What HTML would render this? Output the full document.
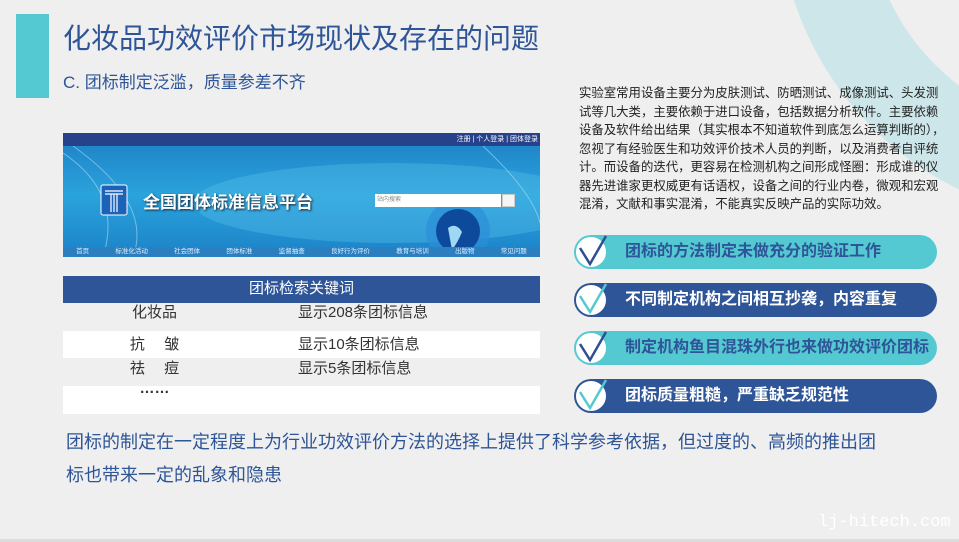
<!DOCTYPE html>
<html><head><meta charset="utf-8"><style>
*{margin:0;padding:0;box-sizing:border-box}
body{width:959px;height:542px;background:#efefef;position:relative;overflow:hidden;font-family:"Liberation Sans","Noto Sans CJK SC",sans-serif}
.abs{position:absolute}
.ring{left:778px;top:-422px;width:644px;height:644px;border-radius:50%;border:89px solid #cde6ea}
.bar{left:16px;top:14px;width:33px;height:84px;background:#55c9d2}
h1{position:absolute;left:63px;top:17px;font-size:28px;font-weight:normal;color:#2e5597;letter-spacing:0;white-space:nowrap}
.sub{left:63px;top:68px;font-size:17px;color:#2e5597;white-space:nowrap}
.rt{left:579px;top:84px;font-size:12.4px;line-height:18.5px;color:#222;white-space:nowrap}
.banner{left:63px;top:133px;width:477px;height:124px;background:linear-gradient(180deg,#1d7fc4 0%,#2aa3dc 50%,#1c82c8 100%);overflow:hidden}
.banner .top{position:absolute;left:0;top:0;width:100%;height:13px;background:#27428a;color:#fff;font-size:7px;text-align:right;padding-right:2px;line-height:13px}
.banner .nav{position:absolute;left:0;bottom:0;width:100%;height:10px;background:#2b7fbf;color:#dfefff;font-size:6.5px;line-height:10px;display:flex;justify-content:space-around}
.table{left:63px;top:276px;width:477px}
.row{height:27.6px;display:flex;font-size:15px;color:#333;line-height:20px}
.pill{position:absolute;left:574px;width:363px;height:34px;border-radius:17px;font-size:16px;line-height:34px;padding-left:51px;font-weight:bold;white-space:nowrap}
.pill .c{position:absolute;left:1px;top:1px;width:32px;height:32px;border-radius:50%;background:#fff}
.pill svg{position:absolute;left:0;top:0}
.bt{left:66px;top:426px;font-size:18px;line-height:33px;color:#2e5597;white-space:nowrap}
</style></head><body>
<div class="abs ring"></div>
<div class="abs bar"></div>
<h1>化妆品功效评价市场现状及存在的问题</h1>
<div class="abs sub">C. 团标制定泛滥，质量参差不齐</div>
<div class="abs rt">实验室常用设备主要分为皮肤测试、防晒测试、成像测试、头发测<br>试等几大类，主要依赖于进口设备，包括数据分析软件。主要依赖<br>设备及软件给出结果（其实根本不知道软件到底怎么运算判断的），<br>忽视了有经验医生和功效评价技术人员的判断，以及消费者自评统<br>计。而设备的迭代，更容易在检测机构之间形成怪圈：形成谁的仪<br>器先进谁家更权威更有话语权，设备之间的行业内卷，微观和宏观<br>混淆，文献和事实混淆，不能真实反映产品的实际功效。</div>

<div class="abs banner">
 <svg class="abs" style="left:0;top:0" width="477" height="124">
  <ellipse cx="330" cy="70" rx="200" ry="40" fill="#5cc3ea" opacity="0.35"/>
  <circle cx="395" cy="98" r="32" fill="#2c8fd8" opacity="0.7"/>
  <circle cx="395" cy="98" r="22" fill="#0e4a9c"/>
  <path d="M385 95 q8 -6 14 4 q-4 10 -10 18z" fill="#9fd8f5"/>
  <path d="M0 20 Q60 60 40 124 M10 13 Q90 70 70 124 M420 13 Q470 60 477 90" stroke="#a9dcf5" stroke-width="1" fill="none" opacity="0.6"/>
  <rect x="38" y="52" width="26" height="30" rx="2" fill="#1b63b8" stroke="#fff" stroke-width="1"/>
  <path d="M42 58h18M42 61h18M48 61v18M51 61v18M54 61v18" stroke="#fff" stroke-width="1.2"/>
 </svg>
 <div class="top">注册 | 个人登录 | 团体登录</div>
 <div class="abs" style="left:80px;top:55px;color:#fff;font-size:17px;font-weight:bold;text-shadow:1px 1px 2px #123">全国团体标准信息平台</div>
 <div class="abs" style="left:312px;top:61px;width:126px;height:13px;background:#fff;font-size:6px;color:#888;line-height:13px;padding-left:2px">站内搜索</div>
 <div class="abs" style="left:439px;top:61px;width:13px;height:13px;background:#f5f5f5;border:1px solid #ccc"></div>
 <div class="nav"><span>首页</span><span>标准化活动</span><span>社会团体</span><span>团体标准</span><span>监督抽查</span><span>良好行为评价</span><span>教育与培训</span><span>出版物</span><span>常见问题</span></div>
</div>

<div class="abs table">
 <div style="height:27px;background:#2e5597;color:#fff;text-align:center;font-size:15px;line-height:25px">团标检索关键词</div>
 <div class="row" style="background:#efefef"><span style="width:183px;text-align:center">化妆品</span><span style="margin-left:52px">显示208条团标信息</span></div>
 <div class="row" style="background:#fff;line-height:27px"><span style="width:183px;text-align:center;letter-spacing:0">抗　 皱</span><span style="margin-left:52px">显示10条团标信息</span></div>
 <div class="row" style="background:#efefef;line-height:22px"><span style="width:183px;text-align:center">祛　 痘</span><span style="margin-left:52px">显示5条团标信息</span></div>
 <div class="row" style="background:#fff;height:28px;line-height:6px"><span style="width:183px;text-align:center;font-weight:bold">……</span></div>
</div>

<div class="pill" style="top:235px;background:#55c9d2;color:#2e5597"><div class="c" style="border:1.5px solid #55c9d2"></div><svg width="40" height="36"><path d="M6 13 L16 29 L32 1" stroke="#2e4f93" stroke-width="2.5" fill="none"/></svg>团标的方法制定未做充分的验证工作</div>
<div class="pill" style="top:283px;background:#2e5597;color:#fff"><div class="c" style="border:1.5px solid #2e5597"></div><svg width="40" height="36"><path d="M6 13 L16 29 L32 1" stroke="#55c9d2" stroke-width="2.5" fill="none"/></svg>不同制定机构之间相互抄袭，内容重复</div>
<div class="pill" style="top:331px;background:#55c9d2;color:#2e5597"><div class="c" style="border:1.5px solid #55c9d2"></div><svg width="40" height="36"><path d="M6 13 L16 29 L32 1" stroke="#2e4f93" stroke-width="2.5" fill="none"/></svg>制定机构鱼目混珠外行也来做功效评价团标</div>
<div class="pill" style="top:379px;background:#2e5597;color:#fff"><div class="c" style="border:1.5px solid #2e5597"></div><svg width="40" height="36"><path d="M6 13 L16 29 L32 1" stroke="#55c9d2" stroke-width="2.5" fill="none"/></svg>团标质量粗糙，严重缺乏规范性</div>

<div class="abs bt">团标的制定在一定程度上为行业功效评价方法的选择上提供了科学参考依据，但过度的、高频的推出团<br>标也带来一定的乱象和隐患</div>
<div class="abs" style="left:818px;top:513px;font-family:'Liberation Mono',monospace;font-size:17px;color:#fff">lj-hitech.com</div>
<div class="abs" style="left:0;top:539px;width:959px;height:3px;background:#dcdcdc"></div>
</body></html>
